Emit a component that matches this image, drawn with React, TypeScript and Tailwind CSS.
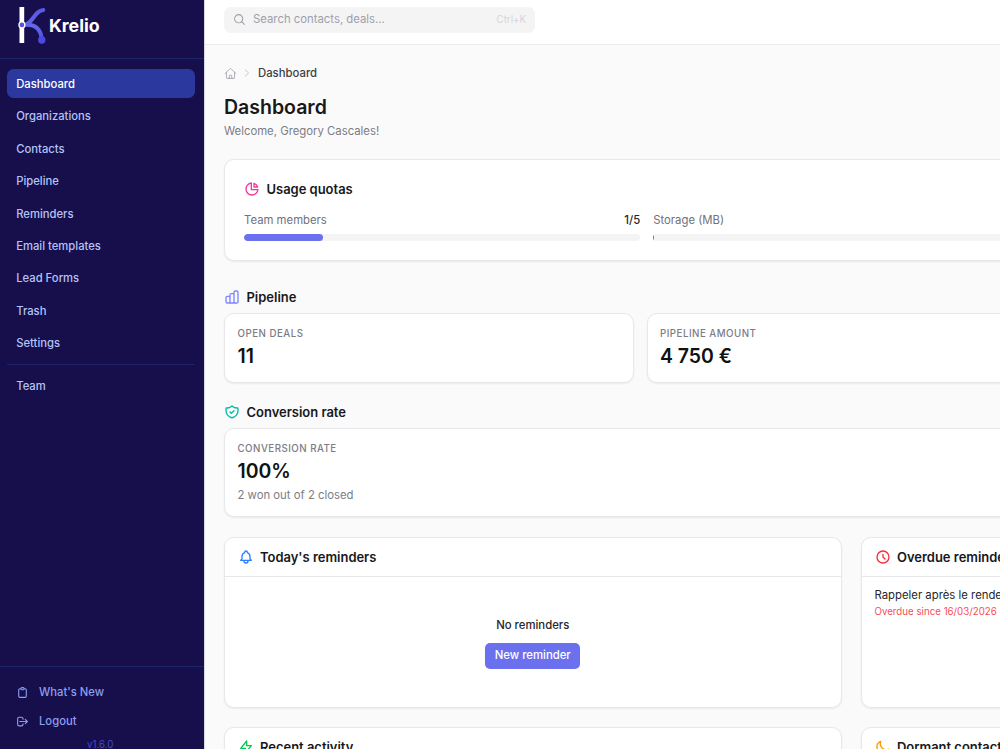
import type { ReactNode } from "react";
import type { IconType } from "react-icons";
import {
  HiOutlineBell,
  HiOutlineChartBar,
  HiOutlineChartPie,
  HiOutlineClipboard,
  HiOutlineClock,
  HiOutlineLightningBolt,
  HiOutlineLogout,
  HiOutlineMoon,
  HiOutlineShieldCheck,
} from "react-icons/hi";
import { HiOutlineChevronRight, HiOutlineHome, HiOutlineMagnifyingGlass } from "react-icons/hi2";

const NAV = [
  "Dashboard",
  "Organizations",
  "Contacts",
  "Pipeline",
  "Reminders",
  "Email templates",
  "Lead Forms",
  "Trash",
  "Settings",
];

const CARD = "bg-white border border-[#e8e8ea] rounded-[10px] shadow-[0_1px_2px_rgba(0,0,0,0.07)]";

function Logo() {
  return (
    <svg className="w-[30px] h-[38px]" viewBox="0 0 30 38" fill="none">
      <defs>
        <linearGradient id="stroke" x1="8" y1="0" x2="26" y2="38" gradientUnits="userSpaceOnUse">
          <stop stopColor="#4a4ad8" />
          <stop offset="0.5" stopColor="#6668ee" />
          <stop offset="1" stopColor="#4a49e0" />
        </linearGradient>
      </defs>
      <rect x="2.5" y="1" width="4.7" height="36" fill="#fff" />
      <path d="M7 18.8C16 18.3 17 4.6 26.3 4" stroke="url(#stroke)" strokeWidth="4" strokeLinecap="round" />
      <path d="M9 18.9C18 18.4 23.5 23 24.8 33" stroke="url(#stroke)" strokeWidth="4" strokeLinecap="round" />
      <circle cx="24.8" cy="34" r="3.7" fill="#4b49df" />
      <circle cx="4.9" cy="18.9" r="3.6" fill="#fff" />
      <circle cx="4.9" cy="18.9" r="2.3" fill="#5150e0" />
    </svg>
  );
}

function NavItem({ label, active }: { label: string; active?: boolean }) {
  return (
    <a
      className={`flex items-center h-[29.2px] px-[9.7px] pt-[2px] rounded-[6.5px] text-[11.25px] font-medium ${
        active ? "bg-[#2b389e] text-white" : "text-[#b4c3f7]"
      }`}
    >
      {label}
    </a>
  );
}

function Sidebar() {
  return (
    <aside className="w-[204.5px] h-full shrink-0 flex flex-col bg-[#170f4b] border-r border-[#d8d8e2]">
      <div className="h-[59px] shrink-0 flex items-start pt-[6px] pl-[17px] border-b border-[#1d2369]">
        <Logo />
        <span className="ml-[2px] mt-[6px] text-[17.8px] leading-[27px] font-bold text-white">Krelio</span>
      </div>
      <nav className="flex flex-col gap-[3.25px] pt-[9.7px] pl-[6.5px] pr-[9px]">
        {NAV.map((label) => (
          <NavItem key={label} label={label} active={label === "Dashboard"} />
        ))}
        <div className="h-px my-[3.2px] bg-[#1d2369]" />
        <NavItem label="Team" />
      </nav>
      <div className="mt-auto h-[83px] shrink-0 border-t border-[#1d2369] pt-[10px] text-[11.25px] font-medium text-[#8c9ef0]">
        <a className="flex items-center h-[29.2px] pl-[16px] pt-[1px] gap-[10px]">
          <HiOutlineClipboard className="size-[13px]" />
          What's New
        </a>
        <a className="flex items-center h-[29.2px] pl-[16px] pt-[1px] gap-[10px]">
          <HiOutlineLogout className="size-[13px]" />
          Logout
        </a>
        <p className="pt-[2.5px] pr-[3px] text-center text-[9.72px] font-normal text-[#4548cf]">v1.6.0</p>
      </div>
    </aside>
  );
}

function SectionTitle({ icon: Icon, color, children }: { icon: IconType; color: string; children: ReactNode }) {
  return (
    <h2 className="flex items-center gap-[6.5px] text-[12.96px] leading-5 font-semibold text-[#18181b]">
      <Icon className={`size-[16px] ${color}`} />
      {children}
    </h2>
  );
}

function Quota({ label, value, percent }: { label: string; value: string; percent: number }) {
  return (
    <div>
      <div className="flex justify-between text-[11.34px] leading-4">
        <span className="text-[#71717a]">{label}</span>
        <span className="font-medium text-[#27272a]">{value}</span>
      </div>
      <div className="mt-[6.5px] h-[6.5px] rounded-full bg-[#f4f4f5] overflow-hidden">
        <div className="h-full rounded-full bg-[#6a70ee]" style={{ width: `${percent}%` }} />
      </div>
    </div>
  );
}

function Stat({ label, value, hint }: { label: string; value: string; hint?: string }) {
  return (
    <div className={`${CARD} pt-[13px] pb-[13px] px-[12.5px]`}>
      <p className="text-[9.72px] leading-[13px] font-medium tracking-[0.49px] uppercase text-[#7c7c84]">{label}</p>
      <p className="mt-[3px] text-[19.44px] leading-[26px] font-semibold text-[#111113]">{value}</p>
      {hint && <p className="mt-[4px] text-[11.34px] leading-[15px] text-[#7c7c84]">{hint}</p>}
    </div>
  );
}

function Panel({
  icon,
  color,
  title,
  children,
}: {
  icon: IconType;
  color: string;
  title: string;
  children?: ReactNode;
}) {
  return (
    <section className={`${CARD} h-[171px] flex flex-col`}>
      <header className="h-[39.5px] shrink-0 flex items-center px-[12.5px] border-b border-[#e8e8ea]">
        <SectionTitle icon={icon} color={color}>{title}</SectionTitle>
      </header>
      {children}
    </section>
  );
}

export default function App() {
  return (
    <div className="w-[1000px] h-[749px] flex overflow-hidden bg-[#fafafa] font-['Inter',sans-serif]">
      <Sidebar />
      <div className="flex-1 min-w-0 overflow-hidden">
        <div className="w-[1293.5px]">
          <div className="h-[45px] pt-[6.5px] pl-[19.5px] bg-white border-b border-[#ececee]">
            <div className="w-[311px] h-[26px] flex items-center pl-[9px] pr-[9px] rounded-[6.5px] bg-[#f4f4f5]">
              <HiOutlineMagnifyingGlass className="size-[13px] text-[#9f9fa9]" strokeWidth={2} />
              <span className="ml-[7px] pt-[1px] text-[11.34px] text-[#9f9fa9]">Search contacts, deals...</span>
              <span className="ml-auto pt-[1px] text-[9.72px] text-[#d4d4d8]">Ctrl+K</span>
            </div>
          </div>
          <main className="px-[19.5px] pt-[20px]">
            <div className="flex items-center h-4 text-[11.34px] font-medium text-[#3f3f46]">
              <HiOutlineHome className="size-[13px] text-[#9f9fa9]" />
              <HiOutlineChevronRight className="size-[10px] ml-[5px] mr-[6px] text-[#d4d4d8]" strokeWidth={2.5} />
              Dashboard
            </div>
            <h1 className="mt-[11.5px] text-[19.5px] leading-[28px] font-semibold text-[#18181b]">Dashboard</h1>
            <p className="mt-[2.5px] text-[11.34px] leading-4 text-[#7c7c84]">Welcome, Gregory Cascales!</p>

            <section className={`${CARD} mt-[20px] h-[102px] px-[19px] pt-[19px]`}>
              <SectionTitle icon={HiOutlineChartPie} color="text-[#f6339a]">Usage quotas</SectionTitle>
              <div className="mt-[12.5px] grid grid-cols-3 gap-[13px]">
                <Quota label="Team members" value="1/5" percent={20} />
                <Quota label="Storage (MB)" value="1/500" percent={0.2} />
                <Quota label="Contacts" value="8/500" percent={2} />
              </div>
            </section>

            <div className="mt-[26px]">
              <SectionTitle icon={HiOutlineChartBar} color="text-[#7c86ff]">Pipeline</SectionTitle>
              <div className="mt-[6px] grid grid-cols-3 gap-[13px]">
                <Stat label="Open deals" value="11" />
                <Stat label="Pipeline amount" value="4 750 €" />
                <Stat label="Won deals" value="2" />
              </div>
            </div>

            <div className="mt-[19px]">
              <SectionTitle icon={HiOutlineShieldCheck} color="text-[#00bba7]">Conversion rate</SectionTitle>
              <div className="mt-[6px]">
                <Stat label="Conversion rate" value="100%" hint="2 won out of 2 closed" />
              </div>
            </div>

            <div className="mt-[19.5px] grid grid-cols-2 gap-[19.5px]">
              <Panel icon={HiOutlineBell} color="text-[#2b7fff]" title="Today's reminders">
                <div className="flex-1 flex flex-col items-center justify-center gap-[10px] pt-[2px]">
                  <p className="text-[11.34px] leading-4 font-medium text-[#27272a]">No reminders</p>
                  <button className="h-[26px] px-[9.7px] rounded-[5px] bg-[#6a70ee] text-[11.34px] font-medium text-white">
                    New reminder
                  </button>
                </div>
              </Panel>
              <Panel icon={HiOutlineClock} color="text-[#fb2c36]" title="Overdue reminders">
                <div className="pt-[10px] px-[12.5px]">
                  <p className="text-[11.34px] leading-[17px] text-[#27272a]">Rappeler après le rendez-vous</p>
                  <p className="text-[9.72px] leading-[15px] text-[#fb4c55]">Overdue since 16/03/2026 - 09:00</p>
                </div>
              </Panel>
              <Panel icon={HiOutlineLightningBolt} color="text-[#00c950]" title="Recent activity" />
              <Panel icon={HiOutlineMoon} color="text-[#fe9a00]" title="Dormant contacts" />
            </div>
          </main>
        </div>
      </div>
    </div>
  );
}
